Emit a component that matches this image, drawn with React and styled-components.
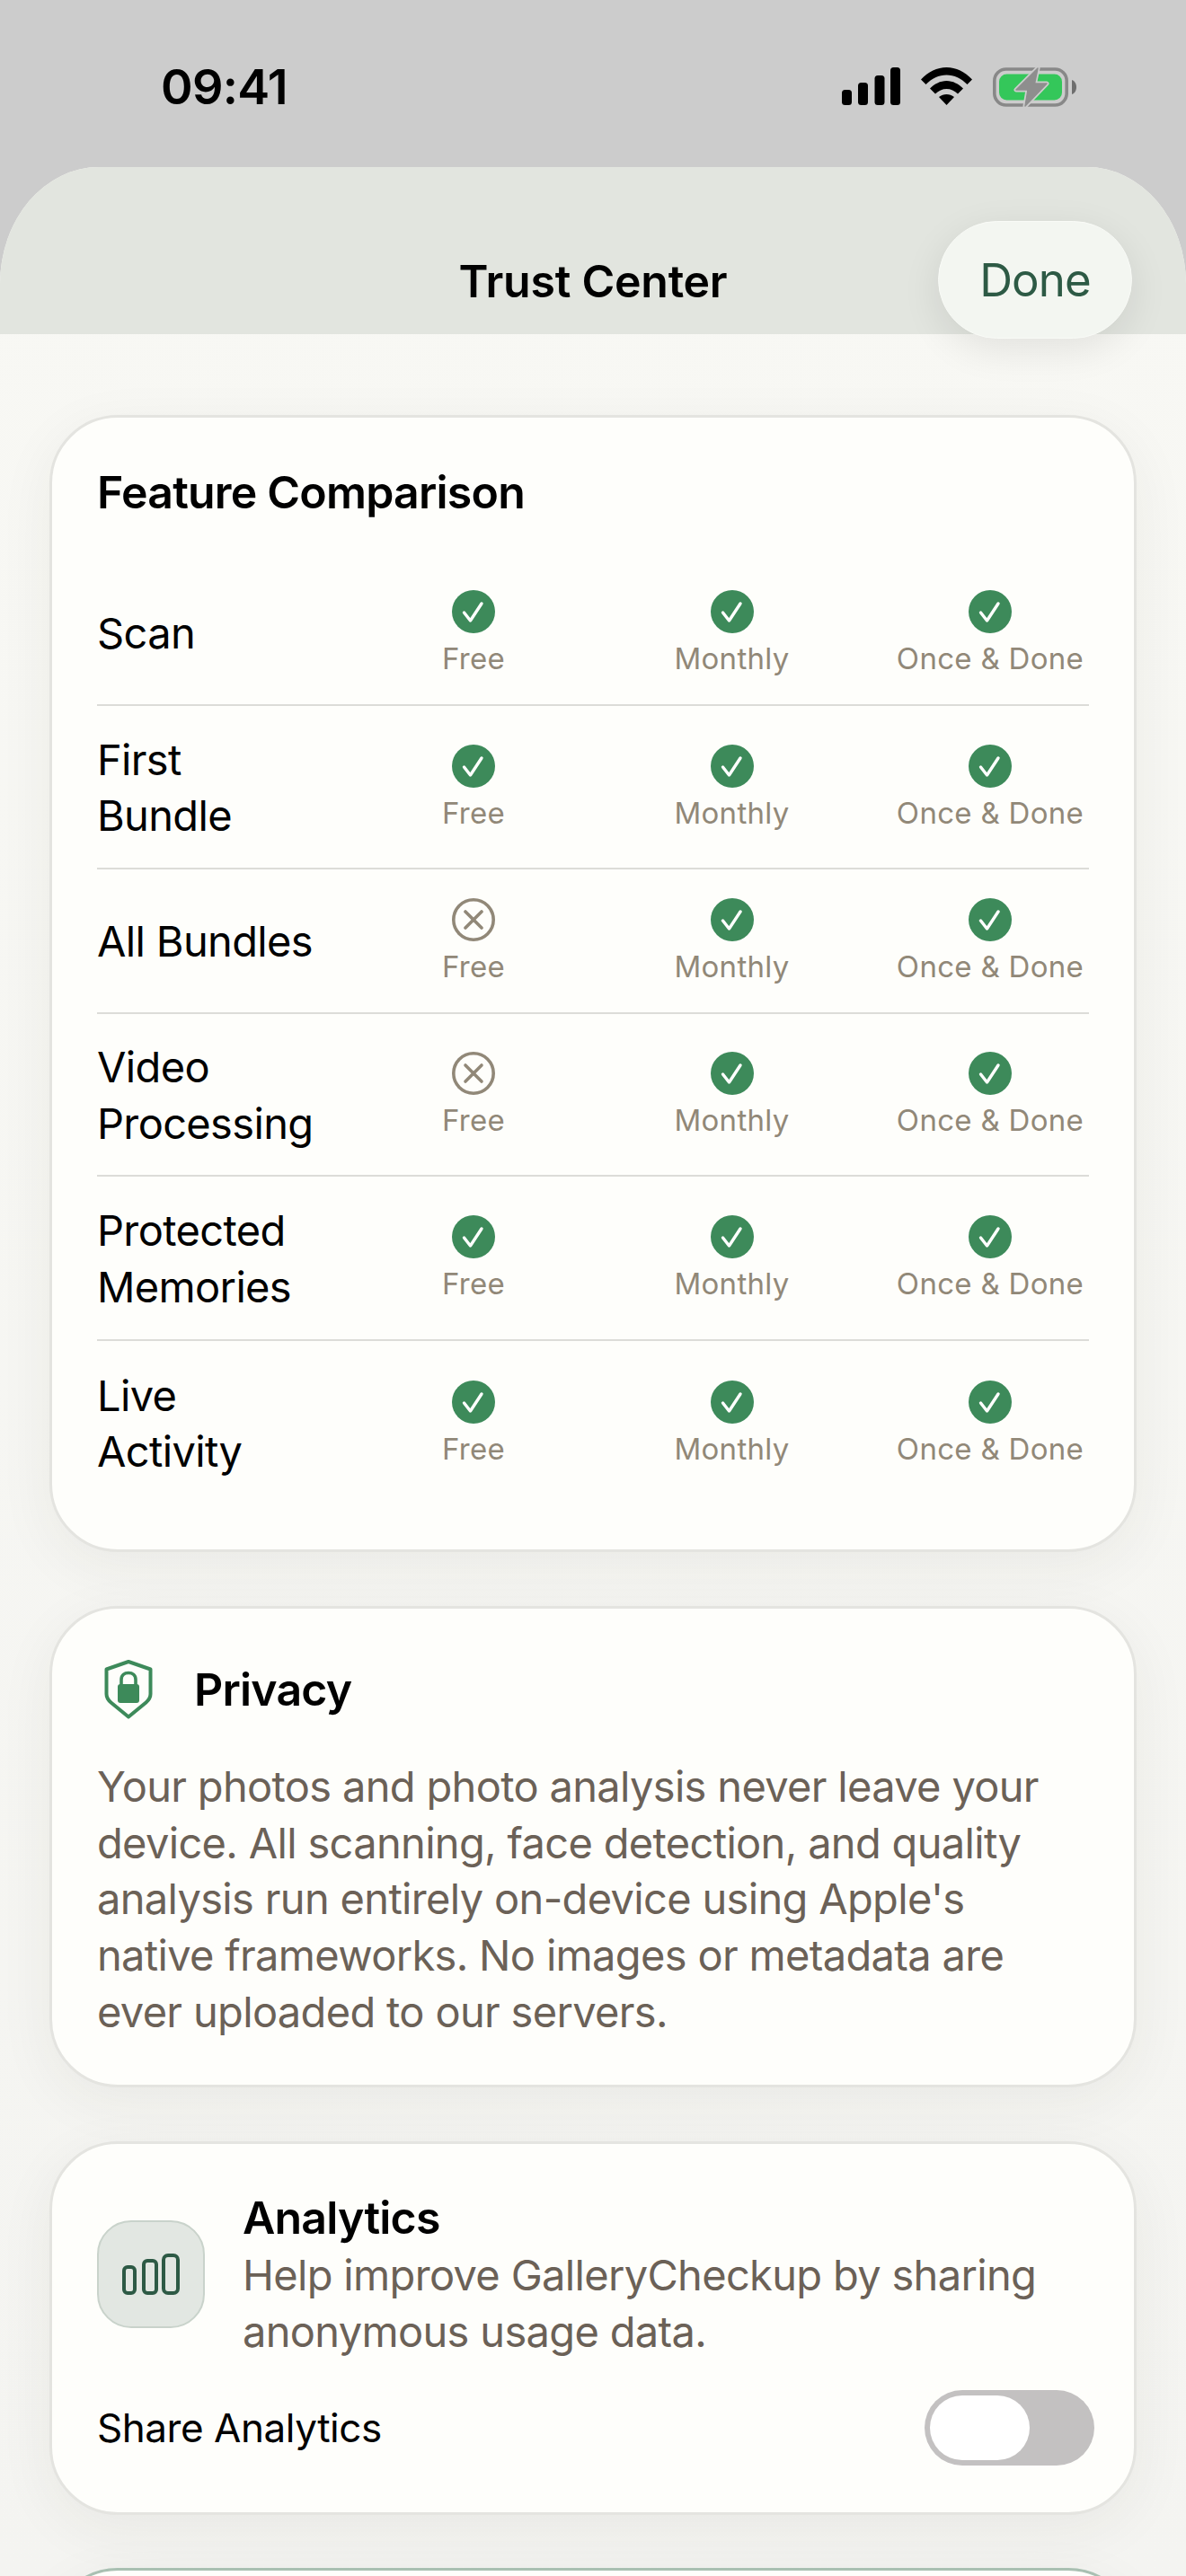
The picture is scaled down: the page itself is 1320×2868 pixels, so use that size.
import React from "react";
import styled, { createGlobalStyle } from "styled-components";

const Global = createGlobalStyle`
  html, body { margin: 0; padding: 0; background: #ccc; }
  * { box-sizing: border-box; }
  body { font-family: Inter, "Noto Sans", sans-serif; -webkit-font-smoothing: antialiased; }
`;

const Screen = styled.div`
  width: 1320px;
  height: 2868px;
  overflow: hidden;
  background: #cccccc;
`;

const StatusBar = styled.div`
  height: 186px;
  display: flex;
  justify-content: space-between;
  align-items: flex-start;
  padding: 0 122px 0 179px;
`;

const Time = styled.div`
  margin-top: 64px;
  font-size: 54px;
  line-height: 66px;
  font-weight: 600;
  letter-spacing: -0.7px;
  color: #000;
`;

const StatusIcons = styled.div`
  margin-top: 75px;
  display: flex;
  align-items: flex-start;
  margin-left: auto;
  svg { display: block; }
`;

const Sheet = styled.div`
  position: relative;
  height: 2682px;
  border-radius: 110px 110px 0 0 / 130px 130px 0 0;
  overflow: hidden;
  background: linear-gradient(180deg, #f8f8f4 0%, #f4f4f1 100%);
`;

const Header = styled.div`
  height: 186px;
  padding-top: 94px;
  background: #e2e5df;
  text-align: center;
`;

const Title = styled.div`
  font-size: 50px;
  line-height: 66px;
  font-weight: 600;
  letter-spacing: -0.25px;
  color: #000;
`;

const DoneButton = styled.div`
  position: absolute;
  top: 60px;
  left: 1044px;
  width: 216px;
  height: 131px;
  border-radius: 66px;
  background: #f3f6f1;
  border: 1px solid #f9fbf7;
  box-shadow: 0 12px 44px rgba(0, 0, 0, 0.09);
  display: flex;
  align-items: center;
  justify-content: center;
  font-size: 51px;
  font-weight: 400;
  letter-spacing: -0.9px;
  color: #2d5a45;
`;

const Content = styled.div`
  padding: 90px 55px 0;
  display: flex;
  flex-direction: column;
  gap: 60px;
`;

const Card = styled.div`
  flex: none;
  border-radius: 76px;
  background: #fefefb;
  border: 3px solid ${(p) => (p.$accent ? "#a9c0b2" : "#e4e4e0")};
  box-shadow: 0 16px 64px rgba(50, 50, 40, 0.06);
  padding: ${(p) => p.$pad || "0 50px"};
  height: ${(p) => p.$height}px;
  margin-top: ${(p) => p.$lift || 0}px;
`;

const CardTitle = styled.div`
  font-size: 50px;
  line-height: 60px;
  font-weight: 600;
  letter-spacing: -0.8px;
  color: #000;
`;

const Rows = styled.div`
  margin-top: 47px;
`;

const Row = styled.div`
  display: grid;
  grid-template-columns: 1fr repeat(3, 220px);
  column-gap: 67.5px;
  align-items: center;
  height: ${(p) => p.$height}px;
  border-bottom: ${(p) => (p.$last ? "none" : "2px solid #dcdcd8")};
`;

const RowLabel = styled.div`
  margin-top: 2px;
  font-size: 47px;
  line-height: 62.5px;
  font-weight: 400;
  letter-spacing: -0.65px;
  color: #000;
`;

const Plan = styled.div`
  display: flex;
  flex-direction: column;
  align-items: center;
  margin-top: 1px;
  svg { display: block; }
`;

const PlanName = styled.div`
  margin-top: 8px;
  font-size: 33px;
  line-height: 40px;
  letter-spacing: 0.3px;
  white-space: nowrap;
  color: #918878;
`;

const PrivacyHead = styled.div`
  display: flex;
  align-items: center;
  gap: 46px;
  padding-left: 8px;
  svg { display: block; }
`;

const BodyText = styled.div`
  font-size: 47px;
  line-height: 62.7px;
  letter-spacing: -0.67px;
  color: #6b6157;
`;

const PrivacyBody = styled(BodyText)`
  margin-top: 44px;
`;

const AnalyticsTop = styled.div`
  display: flex;
  align-items: center;
  gap: 42px;
`;

const IconTile = styled.div`
  flex: none;
  width: 120px;
  height: 120px;
  margin-top: -2px;
  border-radius: 38px;
  background: #e2e7e2;
  border: 2px solid #c9d3cb;
  display: flex;
  align-items: center;
  justify-content: center;
  svg { display: block; }
`;

const AnalyticsTitle = styled(CardTitle)`
  line-height: 62px;
`;

const AnalyticsText = styled(BodyText)`
  margin-top: 2px;
`;

const ShareRow = styled.div`
  margin-top: 34px;
  margin-right: -6px;
  display: flex;
  align-items: center;
  justify-content: space-between;
`;

const ShareLabel = styled.div`
  font-size: 44px;
  font-weight: 400;
  letter-spacing: -0.45px;
  color: #000;
`;

const Toggle = styled.div`
  width: 189px;
  height: 84px;
  padding: 6px;
  border-radius: 42px;
  background: #c3c1c1;
`;

const Thumb = styled.div`
  width: 111px;
  height: 72px;
  border-radius: 36px;
  background: #fff;
`;

const Check = () => (
  <svg width="48" height="48" viewBox="0 0 48 48">
    <circle cx="24" cy="24" r="24" fill="#3d8a5a" />
    <path d="M13.5 25 L20.5 34 L33 15" fill="none" stroke="#fff" strokeWidth="3.4" strokeLinecap="round" strokeLinejoin="round" />
  </svg>
);

const Cross = () => (
  <svg width="48" height="48" viewBox="0 0 48 48">
    <circle cx="24" cy="24" r="22.2" fill="none" stroke="#918878" strokeWidth="3.6" />
    <path d="M15 15 L33 33 M33 15 L15 33" fill="none" stroke="#918878" strokeWidth="3.6" strokeLinecap="round" />
  </svg>
);

const Signal = () => (
  <svg width="65" height="42" viewBox="0 0 65 42">
    <rect x="0" y="25" width="11" height="17" rx="3.5" fill="#000" />
    <rect x="18" y="17" width="11" height="25" rx="3.5" fill="#000" />
    <rect x="36.5" y="9" width="11" height="33" rx="3.5" fill="#000" />
    <rect x="54" y="0" width="11" height="42" rx="3.5" fill="#000" />
  </svg>
);

const Wifi = () => (
  <svg width="57" height="42" viewBox="0 0 57 42" style={{ marginLeft: 23 }}>
    <path d="M0 13.5 C8 5 18 0 28.5 0 C39 0 49 5 57 13.5 L51.5 19 C45 12.5 37 8.5 28.5 8.5 C20 8.5 12 12.5 5.5 19 Z" fill="#000" />
    <path d="M10 23.5 C15 18.5 21.5 15 28.5 15 C35.5 15 42 18.5 47 23.5 L41 29.5 C37.5 26 33 24 28.5 24 C24 24 19.5 26 16 29.5 Z" fill="#000" />
    <path d="M20 33 C22.5 31 25.5 30 28.5 30 C31.5 30 34.5 31 37 33 L28.5 42 Z" fill="#000" />
  </svg>
);

const Battery = () => (
  <svg width="93" height="44" viewBox="0 0 93 44" style={{ marginLeft: 23 }}>
    <rect x="1.8" y="2" width="80.4" height="40" rx="13" fill="none" stroke="#888" strokeWidth="3.6" />
    <rect x="7" y="7.5" width="70" height="29" rx="8.5" fill="#34c75a" />
    <path d="M88 14 C91 15 93 18 93 22 C93 26 91 29 88 30 Z" fill="#6e6e6e" />
    <path
      d="M50 1 L26 25 L39 25 L36 43 L60 18 L46.5 18 Z"
      fill="#8e8e8e"
      stroke="#cccccc"
      strokeWidth="5"
      strokeLinejoin="round"
      paintOrder="stroke"
    />
    <path d="M50 1 L26 25 L39 25 L36 43 L60 18 L46.5 18 Z" fill="#8e8e8e" stroke="#8e8e8e" strokeWidth="1.5" strokeLinejoin="round" />
  </svg>
);

const Shield = () => (
  <svg width="54" height="66" viewBox="0 0 54 66">
    <path d="M27 2 L51.5 10.5 V38 C51.5 42 50 44.5 46.5 47.5 L27 63.5 L7.5 47.5 C4 44.5 2.5 42 2.5 38 V10.5 Z" fill="none" stroke="#3d8a5a" strokeWidth="4" strokeLinejoin="round" />
    <path d="M19 28 V22 C19 17 22.5 14.5 27 14.5 C31.5 14.5 35 17 35 22 V28" fill="none" stroke="#3d8a5a" strokeWidth="3.6" />
    <rect x="15" y="27" width="24" height="21" rx="3" fill="#3d8a5a" />
  </svg>
);

const Bars = () => (
  <svg width="64" height="46" viewBox="0 0 64 46">
    <rect x="2" y="15" width="12" height="29" rx="4" fill="none" stroke="#2d5a45" strokeWidth="4" />
    <rect x="24" y="8" width="14" height="36" rx="4" fill="none" stroke="#2d5a45" strokeWidth="4" />
    <rect x="46" y="2" width="16" height="42" rx="5" fill="none" stroke="#2d5a45" strokeWidth="4" />
  </svg>
);

const features = [
  { name: ["Scan"], free: true, height: 161 },
  { name: ["First", "Bundle"], free: true, height: 182 },
  { name: ["All Bundles"], free: false, height: 161 },
  { name: ["Video", "Processing"], free: false, height: 181 },
  { name: ["Protected", "Memories"], free: true, height: 183 },
  { name: ["Live", "Activity"], free: true, height: 182, last: true },
];

const App = () => (
  <Screen>
    <Global />
    <StatusBar>
      <Time>09:41</Time>
      <StatusIcons>
        <Signal />
        <Wifi />
        <Battery />
      </StatusIcons>
    </StatusBar>
    <Sheet>
      <Header>
        <Title>Trust Center</Title>
      </Header>
      <DoneButton>Done</DoneButton>
      <Content>
        <Card $height={1266} $pad="53px 50px 0">
          <CardTitle>Feature Comparison</CardTitle>
          <Rows>
            {features.map((f) => (
              <Row key={f.name.join(" ")} $height={f.height} $last={f.last}>
                <RowLabel>
                  {f.name.map((line) => (
                    <div key={line}>{line}</div>
                  ))}
                </RowLabel>
                <Plan>
                  {f.free ? <Check /> : <Cross />}
                  <PlanName>Free</PlanName>
                </Plan>
                <Plan>
                  <Check />
                  <PlanName>Monthly</PlanName>
                </Plan>
                <Plan>
                  <Check />
                  <PlanName>Once &amp; Done</PlanName>
                </Plan>
              </Row>
            ))}
          </Rows>
        </Card>
        <Card $height={536} $pad="57px 50px 0">
          <PrivacyHead>
            <Shield />
            <CardTitle>Privacy</CardTitle>
          </PrivacyHead>
          <PrivacyBody>
            Your photos and photo analysis never leave your
            <br />
            device. All scanning, face detection, and quality
            <br />
            analysis run entirely on-device using Apple's
            <br />
            native frameworks. No images or metadata are
            <br />
            ever uploaded to our servers.
          </PrivacyBody>
        </Card>
        <Card $height={416} $pad="51px 50px 0">
          <AnalyticsTop>
            <IconTile>
              <Bars />
            </IconTile>
            <div>
              <AnalyticsTitle>Analytics</AnalyticsTitle>
              <AnalyticsText>
                Help improve GalleryCheckup by sharing
                <br />
                anonymous usage data.
              </AnalyticsText>
            </div>
          </AnalyticsTop>
          <ShareRow>
            <ShareLabel>Share Analytics</ShareLabel>
            <Toggle>
              <Thumb />
            </Toggle>
          </ShareRow>
        </Card>
        <Card $accent $height={200} $lift={-1} />
      </Content>
    </Sheet>
  </Screen>
);

export default App;
